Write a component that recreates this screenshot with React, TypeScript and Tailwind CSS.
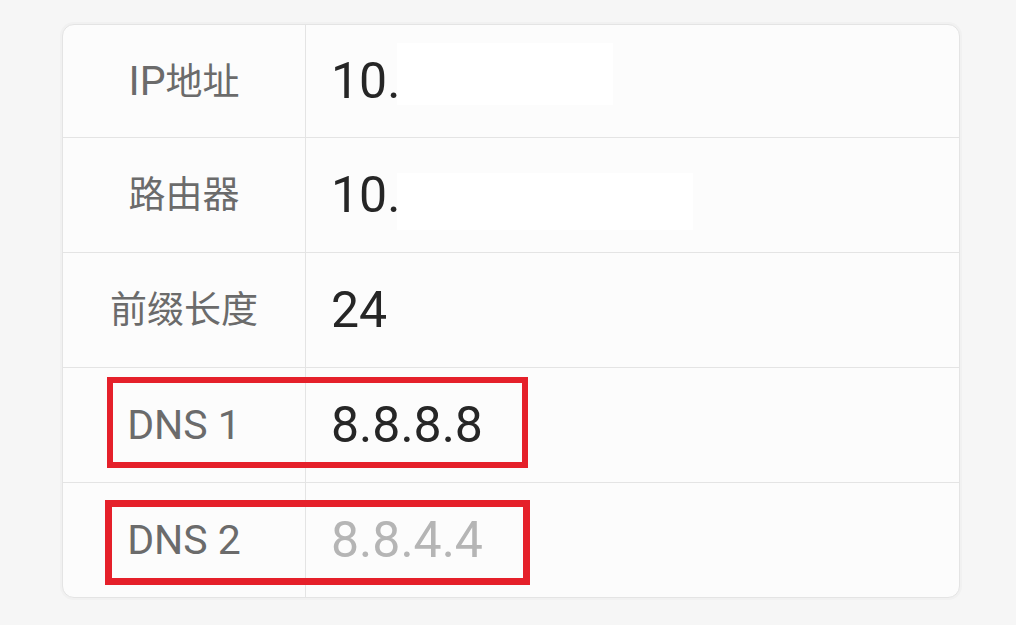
import React from "react";

const font = { fontFamily: '"Roboto", "Noto Sans CJK SC", sans-serif' };

function Row({
  label,
  children,
  first,
  last,
}: {
  label: React.ReactNode;
  children: React.ReactNode;
  first?: boolean;
  last?: boolean;
}) {
  return (
    <div
      className={`flex ${first ? "h-[112px]" : "h-[114px]"} ${
        last ? "" : "border-b border-[#e4e4e4]"
      } box-content`}
    >
      <div className="w-[243px] shrink-0 border-r border-[#e4e4e4] flex items-center justify-center text-[#6b6b6b]">
        {label}
      </div>
      <div className="flex-1 flex items-center pl-[25px] text-[50px] text-[#262626] leading-none">
        {children}
      </div>
    </div>
  );
}

export default function App() {
  return (
    <div className="w-[1016px] h-[625px] bg-[#f6f6f6] pt-[24px] pl-[62px] overflow-hidden" style={font}>
      <div className="relative w-[898px] bg-[#fcfcfc] border border-[#e4e4e4] rounded-[12px] shadow-[0_0_0_2px_#f1f1f1]">
        <Row
          first
          label={
            <span className="leading-none">
              <span className="text-[41px]">IP</span>
              <span className="text-[37px]">地址</span>
            </span>
          }
        >
          <span>10.</span>
          <span className="inline-block w-[216px] h-[62px] bg-white mt-[-14px] ml-[-3px]" />
        </Row>
        <Row label={<span className="text-[37px] leading-none">路由器</span>}>
          <span>10.</span>
          <span className="inline-block w-[296px] h-[57px] bg-white mt-[13px] ml-[-3px]" />
        </Row>
        <Row label={<span className="text-[37px] leading-none">前缀长度</span>}>
          <span>24</span>
        </Row>
        <Row label={<span className="text-[41px] leading-none">DNS 1</span>}>
          <span>8.8.8.8</span>
        </Row>
        <Row last label={<span className="text-[41px] leading-none">DNS 2</span>}>
          <span className="text-[#b5b5b5]">8.8.4.4</span>
        </Row>

        <div className="absolute left-[44px] top-[352px] w-[421px] h-[91px] border-[6px] border-[#e5202a]" />
        <div className="absolute left-[42px] top-[475px] w-[425px] h-[85px] border-[7px] border-[#e5202a]" />
      </div>
    </div>
  );
}
